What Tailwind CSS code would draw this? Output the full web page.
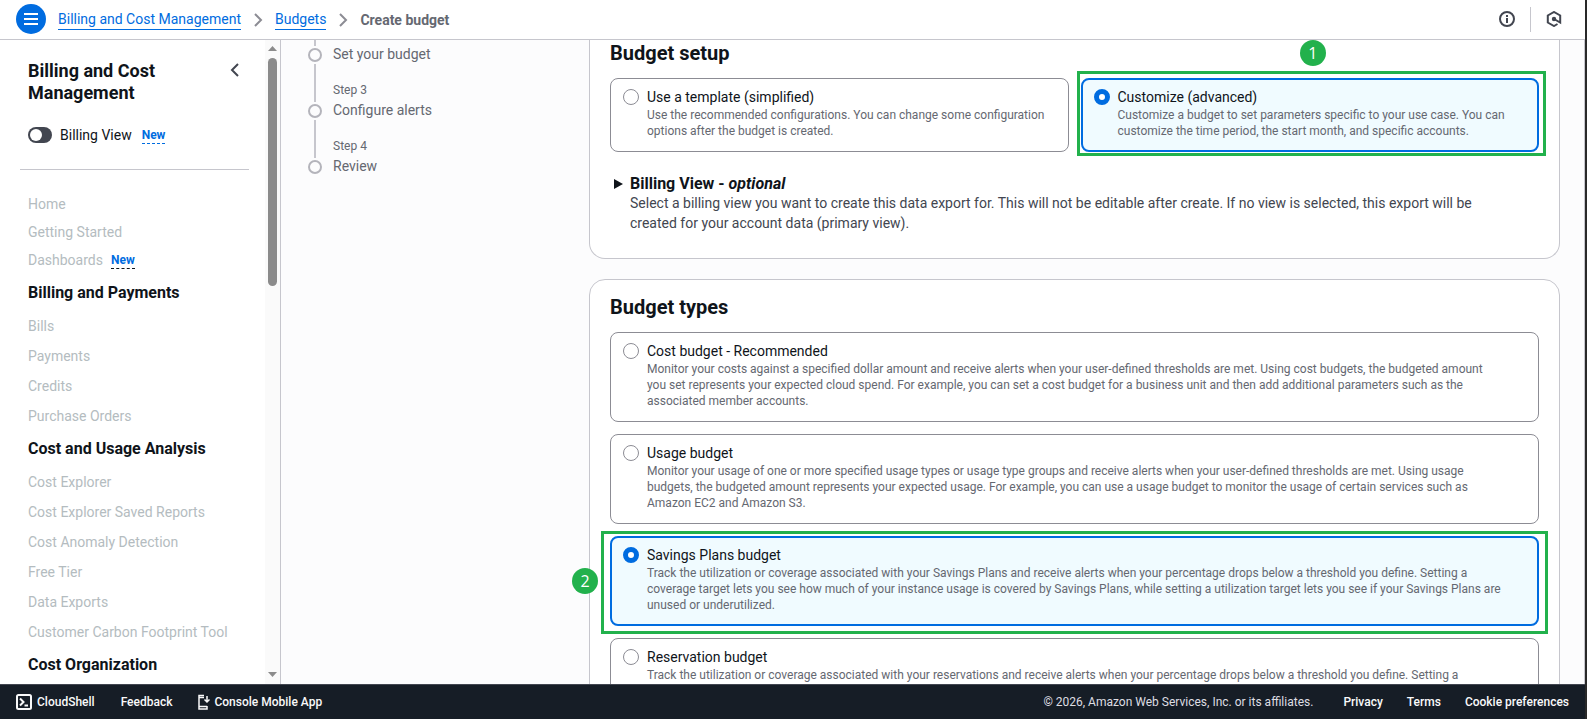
<!DOCTYPE html>
<html lang="en">
<head>
    <meta charset="UTF-8">
    <meta name="viewport" content="width=device-width, initial-scale=1.0">
    <title>Create budget</title>
    <script src="https://cdn.jsdelivr.net/npm/@tailwindcss/browser@4"></script>
</head>

<body class="h-screen flex overflow-hidden bg-[#292929] text-[#0f141a] text-[14px] leading-[20px] font-['Roboto','Noto_Sans',sans-serif]">

    <div class="flex-1 min-w-0 flex flex-col bg-white mr-[2px]">

        <!-- Top bar -->
        <header class="h-10 shrink-0 flex items-center pl-4 pr-[23px] pb-px border-b border-[#c6c6cd]">
            <button aria-label="Open navigation" class="w-[30px] h-[30px] rounded-full bg-[#006ce0] flex items-center justify-center">
                <svg class="w-4 h-4" viewBox="0 0 16 16" fill="none" stroke="#fff" stroke-width="2">
                    <path d="M1 3h14M1 8h14M1 13h14" />
                </svg>
            </button>
            <nav aria-label="Breadcrumbs" class="flex items-center ml-3 pt-px">
                <a href="#" class="text-[#006ce0] border-b border-[#006ce0]">Billing and Cost Management</a>
                <svg class="w-4 h-4 mx-[9px]" viewBox="0 0 16 16" fill="none" stroke="#8c8c94" stroke-width="2">
                    <path d="M5 2l6 6-6 6" />
                </svg>
                <a href="#" class="text-[#006ce0] border-b border-[#006ce0]">Budgets</a>
                <svg class="w-4 h-4 mx-[9px]" viewBox="0 0 16 16" fill="none" stroke="#8c8c94" stroke-width="2">
                    <path d="M5 2l6 6-6 6" />
                </svg>
                <span class="font-bold text-[#656871]">Create budget</span>
            </nav>
            <div class="ml-auto flex items-center">
                <button aria-label="Info">
                    <svg class="w-4 h-4" viewBox="0 0 16 16" fill="none" stroke="#424650" stroke-width="2">
                        <circle cx="8" cy="8" r="7" />
                        <path d="M8 7v5M8 4v2" />
                    </svg>
                </button>
                <span class="w-px h-[25px] bg-[#c6c6cd] mx-[15px]"></span>
                <button aria-label="Amazon Q">
                    <svg class="w-4 h-4" viewBox="0 0 16 16" fill="none" stroke="#424650" stroke-width="2">
                        <path d="M11.500 13L8 15 1.800 11.500V4.500L8 1l6.200 3.500v7L8 8" />
                        <circle cx="8" cy="8" r="1.200" fill="#424650" />
                    </svg>
                </button>
            </div>
        </header>

        <div class="flex-1 min-h-0 flex">

            <!-- Sidebar -->
            <aside class="w-[281px] shrink-0 flex border-r border-[#c6c6cd] overflow-hidden">
                <div class="flex-1 pl-5 pr-4 overflow-hidden">
                    <div class="flex justify-between pl-2 pr-[6px] pt-5">
                        <h2 class="font-bold text-[18px] leading-[22px]">Billing and Cost<br>Management</h2>
                        <button aria-label="Close navigation" class="self-start pt-[2px]">
                            <svg class="w-4 h-4" viewBox="0 0 16 16" fill="none" stroke="#424650" stroke-width="2">
                                <path d="M11 2L5 8l6 6" />
                            </svg>
                        </button>
                    </div>
                    <div class="flex items-center pl-2 mt-[21px] pb-6 border-b border-[#c6c6cd]">
                        <label class="flex items-center gap-2">
                            <input type="checkbox" class="peer sr-only">
                            <span class="w-6 h-4 rounded-full bg-[#424650] flex items-center px-[2px]"><span class="w-3 h-3 rounded-full bg-white"></span></span>
                            Billing View
                        </label>
                        <a href="#" class="ml-[10px] pt-px text-[12px] leading-[16px] font-bold text-[#006ce0] border-b border-dashed border-[#006ce0]">New</a>
                    </div>
                    <nav aria-label="Billing" class="pl-2 pt-6 text-[#b4bcc0] whitespace-nowrap">
                        <ul class="flex flex-col gap-2">
                            <li><a href="#">Home</a></li>
                            <li><a href="#">Getting Started</a></li>
                            <li class="flex items-center"><a href="#">Dashboards</a><a href="#" class="ml-2 pt-px text-[12px] leading-[16px] font-bold text-[#006ce0] border-b border-dashed border-[#0f141a]">New</a></li>
                        </ul>
                        <h3 class="font-bold text-[16px] text-[#0f141a] mt-[13px]">Billing and Payments</h3>
                        <ul class="flex flex-col gap-[10px] mt-[13px]">
                            <li><a href="#">Bills</a></li>
                            <li><a href="#">Payments</a></li>
                            <li><a href="#">Credits</a></li>
                            <li><a href="#">Purchase Orders</a></li>
                        </ul>
                        <h3 class="font-bold text-[16px] text-[#0f141a] mt-[13px]">Cost and Usage Analysis</h3>
                        <ul class="flex flex-col gap-[10px] mt-[13px]">
                            <li><a href="#">Cost Explorer</a></li>
                            <li><a href="#">Cost Explorer Saved Reports</a></li>
                            <li><a href="#">Cost Anomaly Detection</a></li>
                            <li><a href="#">Free Tier</a></li>
                            <li><a href="#">Data Exports</a></li>
                            <li><a href="#">Customer Carbon Footprint Tool</a></li>
                        </ul>
                        <h3 class="font-bold text-[16px] text-[#0f141a] mt-[13px]">Cost Organization</h3>
                    </nav>
                </div>
                <!-- Scrollbar -->
                <div class="w-[15px] bg-[#fafafa] flex flex-col items-center pt-[6px] pb-[7px]">
                    <svg class="w-[9px] h-[5px]" viewBox="0 0 9 5" fill="#8b8b8b"><path d="M0 5L4.500 0 9 5z" /></svg>
                    <div class="w-[9px] h-[228px] mt-[7px] rounded-full bg-[#8b8b8b]"></div>
                    <svg class="w-[9px] h-[5px] mt-auto" viewBox="0 0 9 5" fill="#8b8b8b"><path d="M0 0h9L4.500 5z" /></svg>
                </div>
            </aside>

            <!-- Content -->
            <main class="flex-1 min-w-0 flex bg-[#fcfcfd] pl-[27px] pr-[24px] border-r border-[#c6c6cd] overflow-hidden">

                <!-- Steps -->
                <ol class="w-[281px] shrink-0 text-[#656871]">
                    <li class="flex gap-[11px]">
                        <div class="w-[14px] flex flex-col items-center">
                            <span class="w-[2px] h-[6px] bg-[#c6c6cd]"></span>
                            <span class="w-[14px] h-[14px] my-[2px] rounded-full border-2 border-[#b4b4bb] shrink-0"></span>
                            <span class="w-[2px] flex-1 bg-[#c6c6cd]"></span>
                        </div>
                        <div class="pt-1 pb-4"><a href="#">Set your budget</a></div>
                    </li>
                    <li class="flex gap-[11px]">
                        <div class="w-[14px] flex flex-col items-center">
                            <span class="w-[2px] h-[22px] bg-[#c6c6cd]"></span>
                            <span class="w-[14px] h-[14px] my-[2px] rounded-full border-2 border-[#b4b4bb] shrink-0"></span>
                            <span class="w-[2px] flex-1 bg-[#c6c6cd]"></span>
                        </div>
                        <div class="pb-4"><div class="text-[12px]">Step 3</div><a href="#">Configure alerts</a></div>
                    </li>
                    <li class="flex gap-[11px]">
                        <div class="w-[14px] flex flex-col items-center">
                            <span class="w-[2px] h-[22px] bg-[#c6c6cd]"></span>
                            <span class="w-[14px] h-[14px] my-[2px] rounded-full border-2 border-[#b4b4bb] shrink-0"></span>
                        </div>
                        <div><div class="text-[12px]">Step 4</div><a href="#">Review</a></div>
                    </li>
                </ol>

                <div class="flex-1 min-w-0 flex flex-col gap-5">

                    <!-- Budget setup -->
                    <section class="shrink-0 bg-white border border-t-0 border-[#c6c6cd] rounded-b-[16px] px-5 pb-[25px]">
                        <h2 class="font-bold text-[20px] leading-[24px] pt-px">Budget setup</h2>
                        <div class="grid grid-cols-2 gap-3 mt-[13px]">
                            <label class="flex gap-2 border border-[#8c8c94] rounded-[8px] px-3 pt-2 pb-[12px]">
                                <input type="radio" name="setup" class="appearance-none shrink-0 w-4 h-4 mt-[2px] rounded-full border border-[#8c8c94] bg-white checked:border-[5px] checked:border-[#006ce0]">
                                <span>Use a template (simplified)
                                    <span class="block text-[12px] leading-[16px] text-[#656871]">Use the recommended configurations. You can change some configuration options after the budget is created.</span>
                                </span>
                            </label>
                            <div class="relative">
                                <label class="h-full flex gap-2 border-2 border-[#006ce0] bg-[#f0fbff] rounded-[8px] px-[11px] pt-[7px] pb-[11px]">
                                    <input type="radio" name="setup" checked class="appearance-none shrink-0 w-4 h-4 mt-[2px] rounded-full border border-[#8c8c94] bg-white checked:border-[5px] checked:border-[#006ce0]">
                                    <span>Customize (advanced)
                                        <span class="block text-[12px] leading-[16px] text-[#656871]">Customize a budget to set parameters specific to your use case. You can customize the time period, the start month, and specific accounts.</span>
                                    </span>
                                </label>
                                <div class="absolute -top-[7px] -left-[4px] -right-[7px] -bottom-[4px] border-3 border-[#22b14c] pointer-events-none"></div>
                                <span class="absolute -top-[38px] left-1/2 -translate-x-1/2 w-[26px] h-[26px] ml-[3px] rounded-full bg-[#22b14c] text-white flex items-center justify-center font-['Open_Sans',sans-serif] text-[16px]">1</span>
                            </div>
                        </div>
                        <div class="mt-[22px] ml-[3px] flex gap-[7px]">
                            <button aria-label="Expand billing view" class="self-start w-[10px] h-5 flex items-center justify-center">
                                <svg class="w-[9px] h-[10px]" viewBox="0 0 9 10" fill="#0f141a"><path d="M0 0l9 5-9 5z" /></svg>
                            </button>
                            <div>
                                <h3 class="font-bold text-[16px] leading-[19px]">Billing View - <em>optional</em></h3>
                                <p class="text-[#424650]">Select a billing view you want to create this data export for. This will not be editable after create. If no view is selected, this export will be<br>created for your account data (primary view).</p>
                            </div>
                        </div>
                    </section>

                    <!-- Budget types -->
                    <section class="shrink-0 bg-white border border-[#c6c6cd] rounded-t-[16px] px-5 pt-[15px]">
                        <h2 class="font-bold text-[20px] leading-[24px]">Budget types</h2>
                        <div class="flex flex-col gap-3 mt-[13px]">
                            <label class="flex gap-2 border border-[#8c8c94] rounded-[8px] px-3 pt-2 pb-[12px]">
                                <input type="radio" name="type" class="appearance-none shrink-0 w-4 h-4 mt-[2px] rounded-full border border-[#8c8c94] bg-white checked:border-[5px] checked:border-[#006ce0]">
                                <span>Cost budget - Recommended
                                    <span class="block text-[12px] leading-[16px] text-[#656871]">Monitor your costs against a specified dollar amount and receive alerts when your user-defined thresholds are met. Using cost budgets, the budgeted amount<br>you set represents your expected cloud spend. For example, you can set a cost budget for a business unit and then add additional parameters such as the<br>associated member accounts.</span>
                                </span>
                            </label>
                            <label class="flex gap-2 border border-[#8c8c94] rounded-[8px] px-3 pt-2 pb-[12px]">
                                <input type="radio" name="type" class="appearance-none shrink-0 w-4 h-4 mt-[2px] rounded-full border border-[#8c8c94] bg-white checked:border-[5px] checked:border-[#006ce0]">
                                <span>Usage budget
                                    <span class="block text-[12px] leading-[16px] text-[#656871]">Monitor your usage of one or more specified usage types or usage type groups and receive alerts when your user-defined thresholds are met. Using usage<br>budgets, the budgeted amount represents your expected usage. For example, you can use a usage budget to monitor the usage of certain services such as<br>Amazon EC2 and Amazon S3.</span>
                                </span>
                            </label>
                            <div class="relative">
                                <label class="flex gap-2 border-2 border-[#006ce0] bg-[#f0fbff] rounded-[8px] px-[11px] pt-[7px] pb-[11px]">
                                    <input type="radio" name="type" checked class="appearance-none shrink-0 w-4 h-4 mt-[2px] rounded-full border border-[#8c8c94] bg-white checked:border-[5px] checked:border-[#006ce0]">
                                    <span>Savings Plans budget
                                        <span class="block text-[12px] leading-[16px] text-[#656871]">Track the utilization or coverage associated with your Savings Plans and receive alerts when your percentage drops below a threshold you define. Setting a<br>coverage target lets you see how much of your instance usage is covered by Savings Plans, while setting a utilization target lets you see if your Savings Plans are<br>unused or underutilized.</span>
                                    </span>
                                </label>
                                <div class="absolute -top-[5px] -left-[9px] -right-[9px] -bottom-[8px] border-3 border-[#22b14c] pointer-events-none"></div>
                                <span class="absolute top-1/2 -translate-y-1/2 -left-[38px] w-[26px] h-[26px] rounded-full bg-[#22b14c] text-white flex items-center justify-center font-['Open_Sans',sans-serif] text-[16px]">2</span>
                            </div>
                            <label class="flex gap-2 border border-[#8c8c94] rounded-[8px] px-3 pt-2 pb-[12px]">
                                <input type="radio" name="type" class="appearance-none shrink-0 w-4 h-4 mt-[2px] rounded-full border border-[#8c8c94] bg-white checked:border-[5px] checked:border-[#006ce0]">
                                <span>Reservation budget
                                    <span class="block text-[12px] leading-[16px] text-[#656871]">Track the utilization or coverage associated with your reservations and receive alerts when your percentage drops below a threshold you define. Setting a</span>
                                </span>
                            </label>
                        </div>
                    </section>
                </div>
            </main>
        </div>

        <!-- Footer -->
        <footer class="h-[35px] shrink-0 flex items-center px-4 bg-[#161d26] border-t border-[#424650] text-[12px] text-[#f9f9fa] font-medium">
            <a href="#" class="flex items-center gap-[5px]">
                <svg class="w-4 h-4" viewBox="0 0 16 16" fill="none" stroke="currentColor" stroke-width="2">
                    <rect x="1" y="1" width="14" height="14" rx="1.500" />
                    <path d="M4 4.500L7.500 8 4 11.500M8.500 11.500H12" />
                </svg>
                CloudShell
            </a>
            <a href="#" class="ml-[26px]">Feedback</a>
            <a href="#" class="ml-[26px] flex items-center gap-1">
                <svg class="w-3 h-4" viewBox="0 0 12 16" fill="none" stroke="currentColor" stroke-width="1.500">
                    <path d="M6 1.500H1V15h8v-3M1 3.500h5M1 12.500h8M9 2v6M6.500 5.500L9 8l2.500-2.500" />
                </svg>
                Console Mobile App
            </a>
            <span class="ml-auto font-normal text-[#dedee3]">© 2026, Amazon Web Services, Inc. or its affiliates.</span>
            <a href="#" class="ml-[30px]">Privacy</a>
            <a href="#" class="ml-6">Terms</a>
            <a href="#" class="ml-6">Cookie preferences</a>
        </footer>
    </div>

</body>
</html>
